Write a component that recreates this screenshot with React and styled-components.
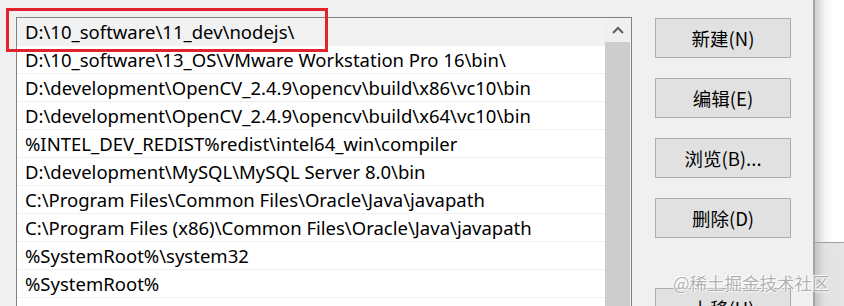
import React from "react";
import styled, { createGlobalStyle } from "styled-components";

const GlobalStyle = createGlobalStyle`
  html, body {
    margin: 0;
    padding: 0;
    background: #ffffff;
  }
  body {
    font-family: "Noto Sans", "Noto Sans CJK SC", sans-serif;
  }
`;

const paths = [
  "D:\\10_software\\11_dev\\nodejs\\",
  "D:\\10_software\\13_OS\\VMware Workstation Pro 16\\bin\\",
  "D:\\development\\OpenCV_2.4.9\\opencv\\build\\x86\\vc10\\bin",
  "D:\\development\\OpenCV_2.4.9\\opencv\\build\\x64\\vc10\\bin",
  "%INTEL_DEV_REDIST%redist\\intel64_win\\compiler",
  "D:\\development\\MySQL\\MySQL Server 8.0\\bin",
  "C:\\Program Files\\Common Files\\Oracle\\Java\\javapath",
  "C:\\Program Files (x86)\\Common Files\\Oracle\\Java\\javapath",
  "%SystemRoot%\\system32",
  "%SystemRoot%",
  "",
];

const buttons = [
  { label: "新建(N)" },
  { label: "编辑(E)" },
  { label: "浏览(B)..." },
  { label: "删除(D)" },
  { label: "上移(U)", spaced: true },
];

const Screen = styled.div`
  position: relative;
  display: flex;
  width: 844px;
  height: 306px;
  overflow: hidden;
`;

const Dialog = styled.div`
  display: flex;
  align-items: flex-start;
  gap: 23px;
  width: 813px;
  flex: 0 0 813px;
  padding: 17px 0 0 16px;
  box-sizing: border-box;
  background: #f0f0f0;
`;

const ListBox = styled.div`
  display: flex;
  width: 616px;
  height: 320px;
  box-sizing: border-box;
  border: 1px solid #828282;
  background: #ffffff;
`;

const Rows = styled.div`
  flex: 1;
  display: flex;
  flex-direction: column;
`;

const Row = styled.div`
  height: 28px;
  box-sizing: border-box;
  border-bottom: 1px solid #f0f0f0;
  padding-left: 8px;
  display: flex;
  align-items: center;
  font-size: 18.5px;
  color: #000;
  white-space: nowrap;
  background: ${(p) => (p.$selected ? "#f2f2f2" : "#ffffff")};
`;

const Scrollbar = styled.div`
  width: 26px;
  display: flex;
  flex-direction: column;
  background: #f0f0f0;
`;

const ArrowButton = styled.div`
  height: 24px;
  display: flex;
  align-items: center;
  justify-content: center;
`;

const Thumb = styled.div`
  flex: 1;
  margin: 0 1px 0 0;
  background: #cdcdcd;
`;

const ButtonColumn = styled.div`
  display: flex;
  flex-direction: column;
  gap: 20px;
  padding-top: 1px;
  width: 136px;
`;

const DialogButton = styled.div`
  height: 40px;
  box-sizing: border-box;
  border: 1px solid #adadad;
  background: #e1e1e1;
  display: flex;
  align-items: center;
  justify-content: center;
  font-family: "Noto Sans CJK SC", sans-serif;
  font-size: 18.5px;
  color: #000;
  margin-top: ${(p) => (p.$spaced ? "30px" : "0")};
`;

const RightStrip = styled.div`
  flex: 1;
  display: flex;
  flex-direction: column;
  border-left: 2px solid #a5a5a5;
`;

const BackWindow = styled.div`
  height: 242px;
  background: linear-gradient(to right, #cfcfcf, #f4f4f4 10px, #ffffff 18px);
`;

const BackPanel = styled.div`
  flex: 1;
  border-top: 1px solid #a0a0a0;
  background: linear-gradient(to right, #c4c4c4, #e2e2e2 10px, #e6e6e6);
`;

const Highlight = styled.div`
  position: absolute;
  left: 6px;
  top: 8px;
  width: 322px;
  height: 44px;
  box-sizing: border-box;
  border: 3px solid #e0232d;
  pointer-events: none;
`;

const Watermark = styled.div`
  position: absolute;
  left: 673px;
  top: 270px;
  font-family: "Noto Sans CJK SC", sans-serif;
  font-size: 17.5px;
  color: rgba(150, 150, 150, 0.75);
  text-shadow: 0 0 1px #fff, 1px 1px 0 rgba(255, 255, 255, 0.8),
    -1px -1px 0 rgba(255, 255, 255, 0.8);
  white-space: nowrap;
`;

const ChevronUp = () => (
  <svg width="14" height="10" viewBox="0 0 14 10">
    <path d="M2 8 L7 3 L12 8" fill="none" stroke="#606060" strokeWidth="2" />
  </svg>
);

export default function App() {
  return (
    <>
      <GlobalStyle />
      <Screen>
        <Dialog>
          <ListBox>
            <Rows>
              {paths.map((p, i) => (
                <Row key={i} $selected={i === 0}>
                  {p}
                </Row>
              ))}
            </Rows>
            <Scrollbar>
              <ArrowButton>
                <ChevronUp />
              </ArrowButton>
              <Thumb />
            </Scrollbar>
          </ListBox>
          <ButtonColumn>
            {buttons.map((b) => (
              <DialogButton key={b.label} $spaced={b.spaced}>
                {b.label}
              </DialogButton>
            ))}
          </ButtonColumn>
        </Dialog>
        <RightStrip>
          <BackWindow />
          <BackPanel />
        </RightStrip>
        <Highlight />
        <Watermark>@稀土掘金技术社区</Watermark>
      </Screen>
    </>
  );
}
